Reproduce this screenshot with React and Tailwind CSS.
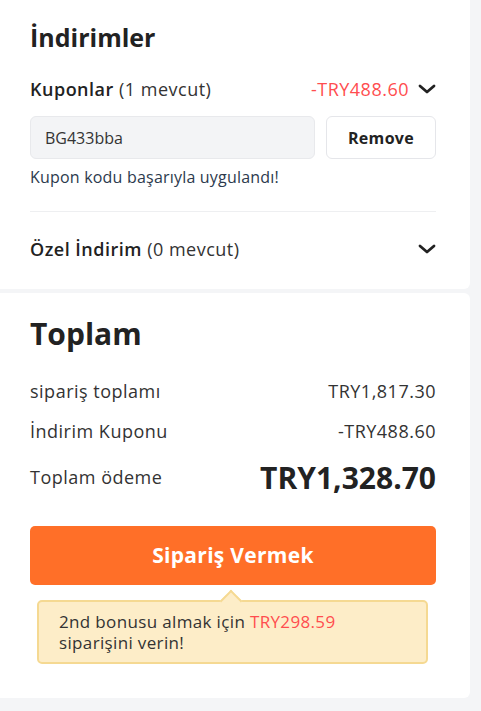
import React from "react";

const Chevron = () => (
  <svg width="18" height="12" viewBox="0 0 18 12" fill="none">
    <path d="M2 3 L9 9 L16 3" stroke="#222" strokeWidth="2.8" strokeLinecap="round" strokeLinejoin="round" />
  </svg>
);

export default function App() {
  return (
    <div className="min-h-[711px] w-[481px] bg-[#f4f5f7] pr-[11px] text-[#333]" style={{ fontFamily: '"Open Sans", "Noto Sans", sans-serif' }}>
      <div className="bg-white rounded-br-md pl-[30px] pr-[34px] pt-[20px] pb-[3px]">
        <h2 className="text-[25px] leading-[34px] font-bold text-[#222]">İndirimler</h2>
        <div className="mt-[20px] flex items-center justify-between h-[30px]">
          <div className="text-[18px] tracking-[0.5px]"><span className="font-semibold text-[#222]">Kuponlar</span> <span>(1 mevcut)</span></div>
          <div className="flex items-center gap-[9px]">
            <span className="text-[18px] tracking-[0.5px] text-[#ff4d4f]">-TRY488.60</span>
            <Chevron />
          </div>
        </div>
        <div className="mt-[12px] flex gap-[11px]">
          <div className="flex-1 h-[43px] rounded-md bg-[#f3f4f6] border border-[#e8e9ec] flex items-center px-[14px] text-[16px] text-[#333]">BG433bba</div>
          <div className="w-[110px] h-[43px] rounded-md border border-[#e5e6ea] bg-white flex items-center justify-center text-[16px] tracking-[0.3px] font-bold text-[#222]">Remove</div>
        </div>
        <div className="mt-[7px] text-[16px] tracking-[0.2px] text-[#2c3a4d] leading-[22px]">Kupon kodu başarıyla uygulandı!</div>
        <div className="mt-[23px] border-t border-[#eeeff1]" />
        <div className="flex items-center justify-between h-[74px]">
          <div className="text-[18px] tracking-[0.5px]"><span className="font-semibold text-[#222]">Özel İndirim</span> <span>(0 mevcut)</span></div>
          <Chevron />
        </div>
      </div>
      <div className="mt-[4px] bg-white rounded-r-md pl-[30px] pr-[34px] pt-[17px] pb-[34px]">
        <h2 className="text-[30px] leading-[48px] font-bold text-[#222]">Toplam</h2>
        <div className="mt-[21px] flex items-center justify-between h-[24px] text-[18px] tracking-[0.5px] text-[#333]">
          <span>sipariş toplamı</span>
          <span>TRY1,817.30</span>
        </div>
        <div className="mt-[16px] flex items-center justify-between h-[24px] text-[18px] tracking-[0.5px] text-[#333]">
          <span>İndirim Kuponu</span>
          <span>-TRY488.60</span>
        </div>
        <div className="mt-[14px] flex items-center justify-between h-[40px]">
          <span className="text-[18px] tracking-[0.5px] text-[#333]">Toplam ödeme</span>
          <span className="text-[30px] font-bold text-[#222]">TRY1,328.70</span>
        </div>
        <div className="mt-[29px] h-[59px] rounded-[5px] bg-[#ff6f28] flex items-center justify-center text-white text-[21px] tracking-[0.3px] font-bold">Sipariş Vermek</div>
        <div className="relative mt-[15px] ml-[7px] mr-[8px] rounded-[5px] bg-[#fdedc8] border-2 border-[#f5d992] px-[20px] py-[9px] text-[17px] tracking-[0.35px] leading-[21px] text-[#333]">
          <div className="absolute -top-[9px] left-[184px] w-[16px] h-[16px] rotate-45 bg-[#fdedc8] border-l-2 border-t-2 border-[#f5d992]" />
          <div className="relative">2nd bonusu almak için <span className="text-[#ff4d4f]">TRY298.59</span><br />siparişini verin!</div>
        </div>
      </div>
    </div>
  );
}
